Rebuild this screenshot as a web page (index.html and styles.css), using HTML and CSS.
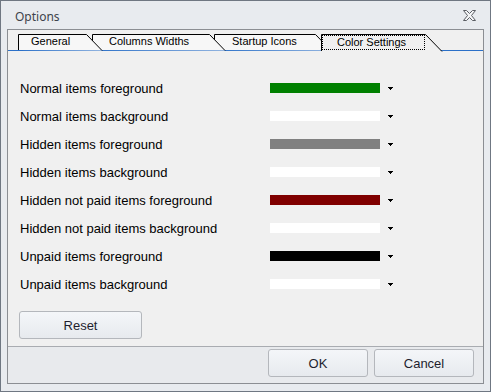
FILE: index.html
```html
<!DOCTYPE html>
<html lang="en">
<head>
    <meta charset="UTF-8">
    <title>Options</title>
    <link rel="stylesheet" href="styles.css">
</head>
<body>
    <div class="window">
        <div class="titlebar">
            <span class="title">Options</span>
            <svg class="close" width="13" height="11" viewBox="0 0 13 11">
                <path d="M0.5,0.5 H3.5 L6.5,3.5 L9.5,0.5 H12.5 L8.5,5.5 L12.5,10.5 H9.5 L6.5,7.5 L3.5,10.5 H0.5 L4.5,5.5 Z" fill="#f4f5f7" stroke="#5a5d63"/>
            </svg>
        </div>

        <div class="panel">
            <div class="tabs">
                <div class="tab tab-general">
                    <svg class="tab-shape" width="84" height="16"><path d="M0.5,16 V0.5 H68.5 L84,16.5" /></svg>
                    <span class="tab-label">General</span>
                </div>
                <div class="tab tab-columns">
                    <svg class="tab-shape" width="133" height="16"><path d="M0.5,16 V0.5 H117.5 L133,16.5" /></svg>
                    <span class="tab-label">Columns Widths</span>
                </div>
                <div class="tab tab-startup">
                    <svg class="tab-shape" width="117" height="16"><path d="M0.5,16 V0.5 H101.5 L117,16.5" /></svg>
                    <span class="tab-label">Startup Icons</span>
                </div>
                <div class="tab tab-color active">
                    <svg class="tab-shape" width="121" height="17"><path d="M0.5,17 V0.5 H104.5 L121,17.5" /></svg>
                    <span class="tab-label">Color Settings</span>
                </div>
            </div>

            <div class="page">
                <div class="color-list">
                    <div class="color-row">
                        <span class="color-name">Normal items foreground</span>
                        <span class="swatch swatch-green"></span>
                        <svg class="drop" width="5" height="3"><polygon points="0,0 5,0 3,3 2,3" /></svg>
                    </div>
                    <div class="color-row">
                        <span class="color-name">Normal items background</span>
                        <span class="swatch swatch-white"></span>
                        <svg class="drop" width="5" height="3"><polygon points="0,0 5,0 3,3 2,3" /></svg>
                    </div>
                    <div class="color-row">
                        <span class="color-name">Hidden items foreground</span>
                        <span class="swatch swatch-gray"></span>
                        <svg class="drop" width="5" height="3"><polygon points="0,0 5,0 3,3 2,3" /></svg>
                    </div>
                    <div class="color-row">
                        <span class="color-name">Hidden items background</span>
                        <span class="swatch swatch-white"></span>
                        <svg class="drop" width="5" height="3"><polygon points="0,0 5,0 3,3 2,3" /></svg>
                    </div>
                    <div class="color-row">
                        <span class="color-name">Hidden not paid items foreground</span>
                        <span class="swatch swatch-maroon"></span>
                        <svg class="drop" width="5" height="3"><polygon points="0,0 5,0 3,3 2,3" /></svg>
                    </div>
                    <div class="color-row">
                        <span class="color-name">Hidden not paid items background</span>
                        <span class="swatch swatch-white"></span>
                        <svg class="drop" width="5" height="3"><polygon points="0,0 5,0 3,3 2,3" /></svg>
                    </div>
                    <div class="color-row">
                        <span class="color-name">Unpaid items foreground</span>
                        <span class="swatch swatch-black"></span>
                        <svg class="drop" width="5" height="3"><polygon points="0,0 5,0 3,3 2,3" /></svg>
                    </div>
                    <div class="color-row">
                        <span class="color-name">Unpaid items background</span>
                        <span class="swatch swatch-white"></span>
                        <svg class="drop" width="5" height="3"><polygon points="0,0 5,0 3,3 2,3" /></svg>
                    </div>
                </div>

                <button class="btn btn-reset">Reset</button>
            </div>

            <div class="footer">
                <button class="btn">OK</button>
                <button class="btn">Cancel</button>
            </div>
        </div>
    </div>
</body>
</html>
```

FILE: styles.css
```css
body {
    margin: 0;
    font-family: 'Liberation Sans', Arial, sans-serif;
    background: #e8ebef;
}

.window {
    width: 491px;
    height: 392px;
    box-sizing: border-box;
    border: 1px solid #6f7782;
    background: #e8ebef;
    padding: 0 6px 7px 6px;
    display: flex;
    flex-direction: column;
}

.titlebar {
    height: 28px;
    box-sizing: border-box;
    padding: 3px 8px 0 8px;
    display: flex;
    align-items: center;
    justify-content: space-between;
}

.title {
    font-family: 'Noto Sans', sans-serif;
    font-size: 12px;
    color: #3e434b;
    line-height: 25px;
}

.close {
    display: block;
    margin-top: -2px;
}

.panel {
    flex: 1;
    border: 1px solid #8b8e93;
    background: #f0f0f0;
    display: flex;
    flex-direction: column;
    min-height: 0;
}

/* tab strip */
.tabs {
    display: flex;
    align-items: flex-start;
    box-sizing: border-box;
    padding: 4px 0 0 10px;
    border-bottom: 1px solid #2b70c8;
    height: 21px;
    flex-shrink: 0;
}

.tab {
    position: relative;
    height: 16px;
    font-size: 11px;
    line-height: 15px;
    color: #000;
}

.tab-shape {
    position: absolute;
    left: 0;
    top: 0;
    overflow: visible;
}

.tab-shape path {
    fill: #f7f7f7;
    stroke: #000;
    stroke-width: 1;
}

.tab-label {
    position: relative;
    display: block;
}

.tab-general {
    width: 84px;
    z-index: 4;
}

.tab-general .tab-label {
    padding-left: 13px;
}

.tab-columns {
    width: 133px;
    margin-left: -10px;
    z-index: 3;
}

.tab-columns .tab-label {
    padding-left: 17px;
}

.tab-startup {
    width: 117px;
    margin-left: -11px;
    z-index: 2;
}

.tab-startup .tab-label {
    padding-left: 18px;
}

.tab-color {
    width: 121px;
    margin-left: -10px;
}

.tab.active {
    height: 17px;
    z-index: 5;
}

.tab.active .tab-shape path {
    fill: #f0f0f0;
}

.tab.active .tab-label {
    margin: 1px 0 0 1px;
    width: 103px;
    height: 15px;
    box-sizing: border-box;
    border: 1px dotted #000;
    padding-left: 14px;
    line-height: 12px;
}

/* color settings page */
.page {
    flex: 1;
    padding: 23px 0 0 11px;
}

.color-row {
    display: flex;
    align-items: center;
    height: 28px;
}

.color-name {
    width: 250px;
    padding-left: 1px;
    font-size: 13px;
    color: #000;
}

.swatch {
    width: 110px;
    height: 10px;
}

.swatch-green { background: #008000; }
.swatch-white { background: #ffffff; }
.swatch-gray { background: #808080; }
.swatch-maroon { background: #800000; }
.swatch-black { background: #000000; }

.drop {
    display: block;
    margin-left: 8px;
    shape-rendering: crispEdges;
}

.btn {
    height: 28px;
    width: 100px;
    box-sizing: border-box;
    border: 1px solid #b4b7bc;
    border-radius: 3px;
    background: linear-gradient(#f4f6f9, #e7eaee);
    font-family: 'Liberation Sans', Arial, sans-serif;
    font-size: 13px;
    color: #1e1e2e;
    padding: 0;
}

.btn-reset {
    width: 123px;
    margin-top: 13px;
    display: block;
}

.footer {
    box-sizing: border-box;
    flex-shrink: 0;
    border-top: 1px solid #a9acb1;
    background: #e8eaed;
    height: 37px;
    display: flex;
    justify-content: flex-end;
    align-items: flex-start;
    gap: 6px;
    padding: 2px 9px 0 0;
}
```
